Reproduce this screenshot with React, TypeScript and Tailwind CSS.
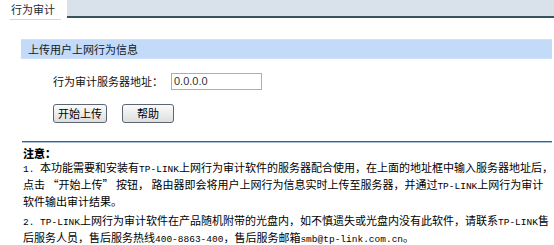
export default function App() {
  const cn = { fontFamily: '"Noto Sans CJK SC", "Liberation Sans", sans-serif' };

  // latin runs inside the notice use a narrow mono face, like the SimSun half-width glyphs
  const L = ({ children }: { children: string }) => (
    <span className="text-[9.5px]" style={{ fontFamily: '"Liberation Mono", monospace' }}>
      {children}
    </span>
  );

  return (
    <div lang="zh-CN" className="w-[554px] h-[245px] bg-white text-black overflow-hidden text-[11px]" style={cn}>
      {/* tab strip */}
      <div className="flex items-start">
        <div className="w-[67px] h-[19px] pl-[11px] pt-[1px] leading-[16px] text-[#1a2a3a]">
          <span className="border-b border-[#d4d8dc] pb-[2px] pr-[6px] -ml-[1px] pl-[1px]">行为审计</span>
        </div>
        <div className="flex-1 h-[18px] bg-[#d9e1eb] border-b-2 border-[#38535e]" />
      </div>

      <div className="pl-[21px] pr-[2px]">
        {/* section header */}
        <div className="mt-[20px] h-[20px] bg-[#c3dbf9] border-y border-[#cfe2fb] pl-[7px] flex items-center text-[#111a26]">
          上传用户上网行为信息
        </div>

        {/* form row */}
        <div className="mt-[14px] pl-[32px] flex items-center">
          <div className="w-[118px] text-[#111]">行为审计服务器地址：</div>
          <div
            className="w-[91px] h-[17px] border border-[#a9aeb5] bg-white flex items-center pl-[2px] text-[11px] text-[#333]"
            style={{ fontFamily: '"Liberation Sans", sans-serif' }}
          >
            0.0.0.0
          </div>
        </div>

        {/* buttons */}
        <div className="mt-[14px] pl-[32px] flex gap-[15px]">
          <button className="w-[54px] h-[19px] rounded-[3px] border border-[#5b6672] bg-gradient-to-b from-[#fbfbfb] to-[#dedede] flex items-center justify-center text-[11px]">
            开始上传
          </button>
          <button className="w-[52px] h-[19px] rounded-[3px] border border-[#5b6672] bg-gradient-to-b from-[#fbfbfb] to-[#dedede] flex items-center justify-center text-[11px]">
            帮助
          </button>
        </div>

        {/* divider */}
        <div className="mt-[18px] ml-[1px] h-[2px] bg-[#36628e] border-b border-[#a9c0d8]" />

        {/* notice */}
        <div className="pl-[2px] pt-[3px] leading-[14px] whitespace-nowrap text-[11px]">
          <div className="font-black">注意：</div>
          <p>
            <L>1. </L>本功能需要和安装有<L>TP-LINK</L>上网行为审计软件的服务器配合使用，在上面的地址框中输入服务器地址后，
            <br />
            点击 “开始上传” 按钮， 路由器即会将用户上网行为信息实时上传至服务器，并通过<L>TP-LINK</L>上网行为审计
            <br />
            软件输出审计结果。
          </p>
          <p className="mt-[5px]">
            <L>2. TP-LINK</L>上网行为审计软件在产品随机附带的光盘内，如不慎遗失或光盘内没有此软件，请联系<L>TP-LINK</L>售
            <br />
            后服务人员，售后服务热线<L>400-8863-400</L>，售后服务邮箱<L>smb@tp-link.com.cn</L>。
          </p>
        </div>
      </div>
    </div>
  );
}
